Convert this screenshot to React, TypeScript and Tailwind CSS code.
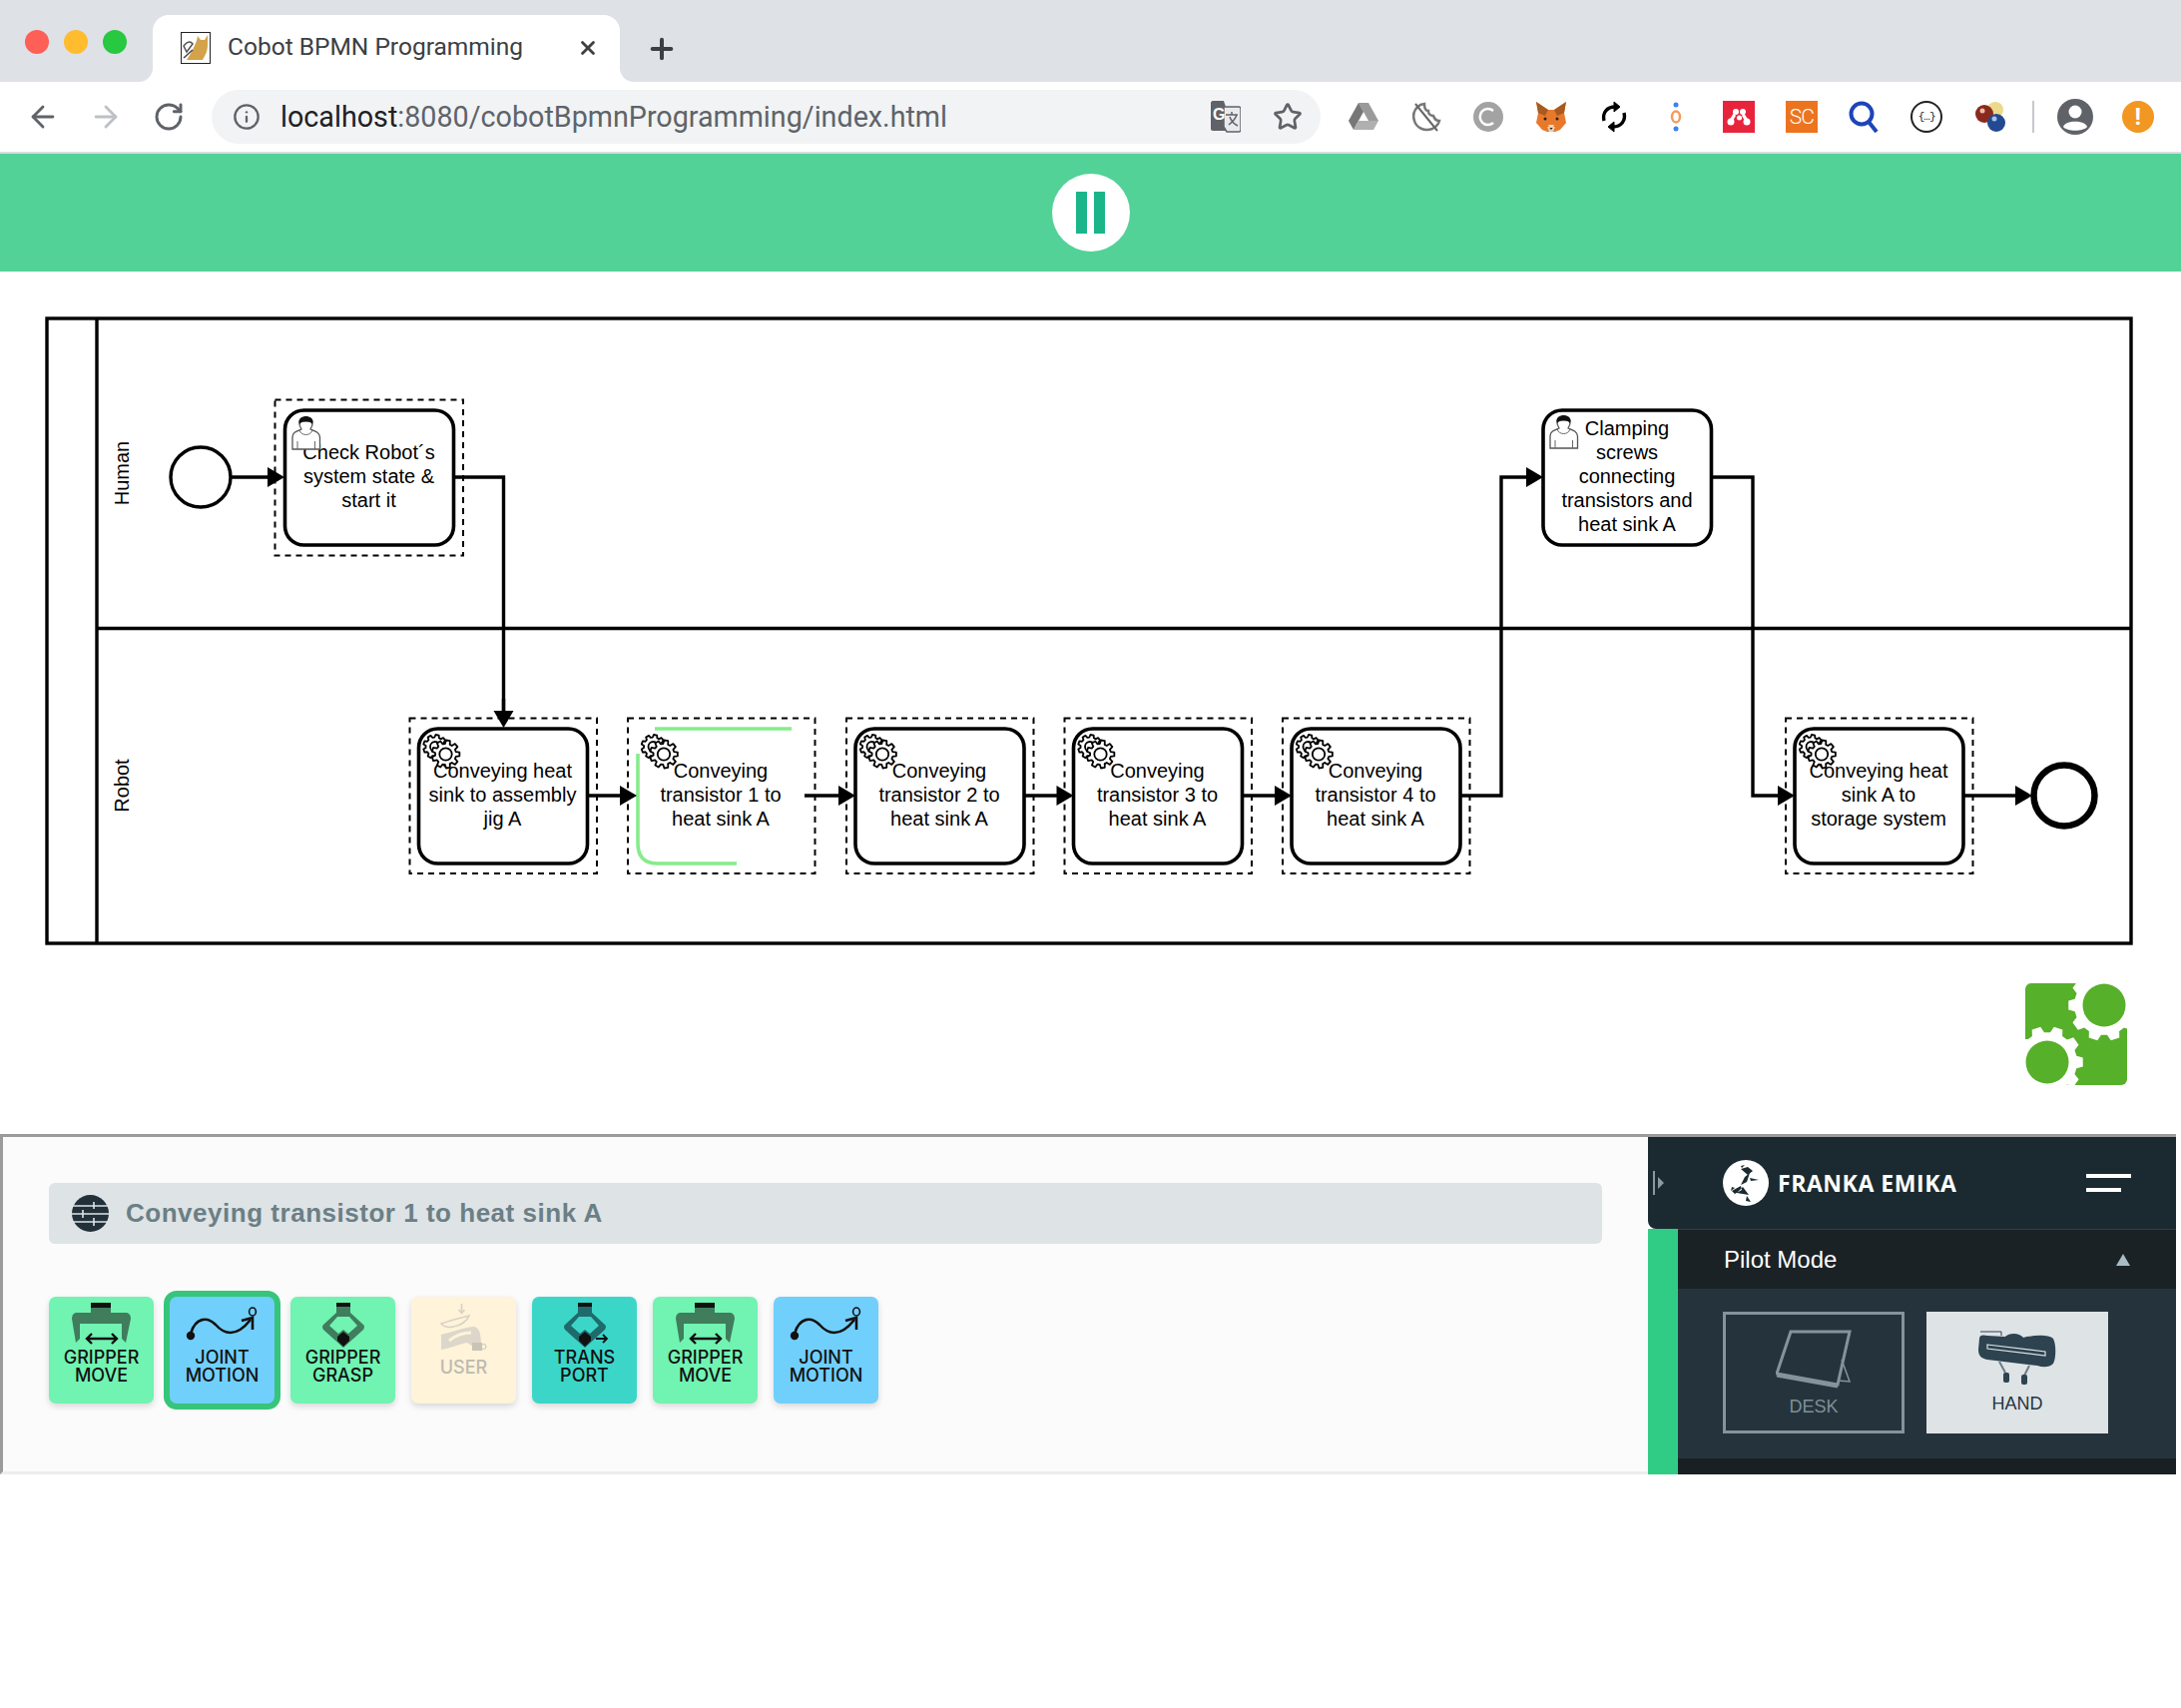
import React from "react";
import { ArrowLeft, ArrowRight, RotateCw, Info, Star, X, Plus } from "lucide-react";

function gearPath(cx: number, cy: number, rIn: number, rOut: number, teeth: number) {
  const pts: string[] = [];
  const step = (Math.PI * 2) / teeth;
  for (let i = 0; i < teeth; i++) {
    const a = i * step;
    const seq: [number, number][] = [
      [rIn, a - step * 0.34],
      [rOut, a - step * 0.2],
      [rOut, a + step * 0.2],
      [rIn, a + step * 0.34],
    ];
    for (const [r, t] of seq) pts.push(`${(cx + r * Math.cos(t)).toFixed(2)} ${(cy + r * Math.sin(t)).toFixed(2)}`);
  }
  return "M" + pts.join("L") + "Z";
}

function Gears({ x, y }: { x: number; y: number }) {
  return (
    <g fill="#fff" stroke="#000" strokeWidth={1.8} strokeLinejoin="round">
      <path d={gearPath(x + 16.5, y + 19, 9.5, 12, 9)} />
      <circle cx={x + 16.5} cy={y + 19} r={5} />
      <path d={gearPath(x + 27, y + 26.5, 10.5, 14, 9)} />
      <circle cx={x + 27} cy={y + 26.5} r={6.2} />
    </g>
  );
}

function Person({ x, y }: { x: number; y: number }) {
  return (
    <g transform={`translate(${x} ${y})`}>
      <path
        d="M1 33V21C1 16 5 15 10 13C8 10 7.5 8 8 5H21C21.5 8 21 10 19 13C24 15 28 16 28.5 21V33Z"
        fill="#fff"
        stroke="#555"
        strokeWidth={1.3}
      />
      <path d="M8 14C10 20 19 20 21 14M6 25V33M23.5 25V33" fill="none" stroke="#666" strokeWidth={1} />
      <path d="M8 8C6 2 11 0 14.5 0C18 0 23 2 21 8C18 4 11 4 8 8Z" fill="#111" />
    </g>
  );
}

function Arrow({ d, tx, ty, dir }: { d: string; tx: number; ty: number; dir: "r" | "d" }) {
  const head =
    dir === "r"
      ? `${tx},${ty} ${tx - 17},${ty - 10} ${tx - 17},${ty + 10}`
      : `${tx},${ty} ${tx - 10},${ty - 17} ${tx + 10},${ty - 17}`;
  return (
    <g>
      <path d={d} fill="none" stroke="#000" strokeWidth={3.4} />
      <polygon points={head} fill="#000" />
    </g>
  );
}

type Task = { x: number; lines: string[]; box?: boolean };

const robotTasks: Task[] = [
  { x: 419.5, lines: ["Conveying heat", "sink to assembly", "jig A"], box: true },
  { x: 638, lines: ["Conveying", "transistor 1 to", "heat sink A"], box: false },
  { x: 857, lines: ["Conveying", "transistor 2 to", "heat sink A"], box: true },
  { x: 1075.5, lines: ["Conveying", "transistor 3 to", "heat sink A"], box: true },
  { x: 1294, lines: ["Conveying", "transistor 4 to", "heat sink A"], box: true },
  { x: 1798, lines: ["Conveying heat", "sink A to", "storage system"], box: true },
];

function Lines({ cx, lines, first }: { cx: number; lines: string[]; first: number }) {
  return (
    <text textAnchor="middle" fill="#000" className="font-['Liberation_Sans',sans-serif] text-[20px]">
      {lines.map((l, i) => (
        <tspan key={i} x={cx} y={first + i * 24}>
          {l}
        </tspan>
      ))}
    </text>
  );
}

function Diagram() {
  return (
    <svg width={2092} height={632} viewBox="45 317 2092 632" className="block">
      <rect x={47} y={319} width={2088} height={626} fill="#fff" stroke="#000" strokeWidth={3.4} />
      <path d="M97 319V945M97 629.5H2135" stroke="#000" strokeWidth={3.4} fill="none" />
      <text
        transform="translate(129 474) rotate(-90)"
        textAnchor="middle"
        className="font-['Liberation_Sans',sans-serif] text-[20px]"
      >
        Human
      </text>
      <text
        transform="translate(129 787) rotate(-90)"
        textAnchor="middle"
        className="font-['Liberation_Sans',sans-serif] text-[20px]"
      >
        Robot
      </text>

      <circle cx={201} cy={478} r={30} fill="#fff" stroke="#000" strokeWidth={3.4} />
      <circle cx={2068} cy={797} r={30.5} fill="#fff" stroke="#000" strokeWidth={6.5} />

      <rect x={275.5} y={400.5} width={188.5} height={156} fill="none" stroke="#000" strokeWidth={2} strokeDasharray="6 5" />
      <rect x={285.5} y={411} width={169} height={135} rx={19} fill="#fff" stroke="#000" strokeWidth={3.6} />
      <Lines cx={369.5} lines={["Check Robot´s", "system state &", "start it"]} first={460} />
      <Person x={292} y={417} />

      <rect x={1546} y={411} width={168.5} height={135} rx={19} fill="#fff" stroke="#000" strokeWidth={3.6} />
      <Lines cx={1630} lines={["Clamping", "screws", "connecting", "transistors and", "heat sink A"]} first={436} />
      <Person x={1552} y={416} />

      {robotTasks.map((t, i) => (
        <g key={i}>
          <rect
            x={t.x - 9}
            y={719.5}
            width={187.5}
            height={155.5}
            fill="none"
            stroke="#000"
            strokeWidth={2}
            strokeDasharray="6 5"
          />
          {t.box ? (
            <rect x={t.x} y={730} width={169} height={135} rx={19} fill="#fff" stroke="#000" strokeWidth={3.6} />
          ) : (
            <path
              d="M656 730H793M639 755V845Q639 865 659 865H738"
              fill="none"
              stroke="#86ec8c"
              strokeWidth={3.6}
            />
          )}
          <Lines cx={t.x + 84} lines={t.lines} first={779} />
          <Gears x={t.x} y={729} />
        </g>
      ))}

      <Arrow d="M231 478H270" tx={285} ty={478} dir="r" />
      <path d="M455 478H504.5V712" fill="none" stroke="#000" strokeWidth={3.4} />
      <Arrow d="M504.5 700V714" tx={504.5} ty={729} dir="d" />
      <Arrow d="M589 797H625" tx={638} ty={797} dir="r" />
      <Arrow d="M806 797H845" tx={857} ty={797} dir="r" />
      <Arrow d="M1026.5 797H1062" tx={1075.5} ty={797} dir="r" />
      <Arrow d="M1245 797H1280" tx={1294} ty={797} dir="r" />
      <Arrow d="M1463.5 797H1504V478H1532" tx={1546} ty={478} dir="r" />
      <Arrow d="M1715 478H1756V797H1785" tx={1798} ty={797} dir="r" />
      <Arrow d="M1967.5 797H2025" tx={2036} ty={797} dir="r" />
    </svg>
  );
}

function GreenLogo() {
  return (
    <svg width={102} height={102} viewBox="0 0 102 102" className="block">
      <rect x={0} y={0} width={102} height={102} rx={6} fill="#56b029" />
      <path d={gearPath(79, 22, 30, 36, 10)} fill="#fff" />
      <path d={gearPath(22, 79, 30, 36, 10)} fill="#fff" />
      <rect x={68} y={0} width={34} height={43} fill="#fff" />
      <rect x={0} y={56} width={30} height={46} fill="#fff" />
      <circle cx={79} cy={22} r={21.5} fill="#56b029" />
      <circle cx={22} cy={79} r={21.5} fill="#56b029" />
    </svg>
  );
}

/* ---------- card icons ---------- */
function GripperMove() {
  return (
    <svg width={105} height={46} viewBox="0 0 105 46" className="block">
      <path d="M42 0H62V6H42Z" fill="#111" />
      <path
        d="M42 5H62V10H78Q82 11 82 16L77 40L73 36V21H31V36L27 40L23 16Q23 11 27 10H42Z"
        fill="#3f7d5c"
      />
      <path d="M39 36H67M43 31L38 36L43 41M63 31L68 36L63 41" fill="none" stroke="#111" strokeWidth={2.4} />
    </svg>
  );
}
function JointMotion() {
  return (
    <svg width={105} height={46} viewBox="0 0 105 46" className="block">
      <circle cx={21} cy={33} r={4.2} fill="#111" />
      <path d="M21 31C26 14 38 14 46 22C54 31 66 36 81 17" fill="none" stroke="#111" strokeWidth={2.6} />
      <path d="M72 18L83 15L83 27" fill="none" stroke="#111" strokeWidth={2.6} />
      <ellipse cx={83} cy={9} rx={3.4} ry={4} fill="none" stroke="#111" strokeWidth={1.6} />
    </svg>
  );
}
function Grasp({ color, hole, arrow }: { color: string; hole: string; arrow?: boolean }) {
  return (
    <svg width={105} height={46} viewBox="0 0 105 46" className="block">
      <path d="M46 0H60V5H46Z" fill="#111" />
      <path d="M46 4H60V10L73 22Q75 24 73 27L53 45L33 27Q31 24 33 22L46 10Z" fill={color} />
      <path d="M47 14H59L67 23L58 31L53 27L48 31L39 23Z" fill={hole} />
      <path d="M47 34L53 29L59 34V38L53 44L47 38Z" fill="#111" />
      {arrow && <path d="M64 36H75M71 32L75 36L71 40" fill="none" stroke="#111" strokeWidth={1.8} />}
    </svg>
  );
}
function UserIcon() {
  return (
    <svg width={105} height={56} viewBox="0 0 105 56" className="block">
      <g fill="none" stroke="#d8d2c4" strokeWidth={1.6}>
        <path d="M50.5 1V10M47.5 7L50.5 10.500L53.500 7" />
        <path d="M30 21C38 18 46 16 58 13C56 18 50 23 42 24C38 25 33 24 30 21Z" />
      </g>
      <path
        d="M30 32C42 29 52 25 62 24C68 24 70 30 70 44H62L56 40C46 42 38 46 30 47Z"
        fill="#dcd7ca"
      />
      <path d="M38 38C44 33 52 30 60 30" fill="none" stroke="#fff3d8" strokeWidth={3} />
      <rect x={61} y={40} width={10} height={8} fill="#c9c4b8" />
      <circle cx={72.500} cy={44} r={2.500} fill="none" stroke="#c9c4b8" />
    </svg>
  );
}

const cards = [
  { l: ["GRIPPER", "MOVE"], bg: "bg-[#71f3b2]", icon: <GripperMove /> },
  { l: ["JOINT", "MOTION"], bg: "bg-[#71cffc]", icon: <JointMotion />, sel: true },
  { l: ["GRIPPER", "GRASP"], bg: "bg-[#71f3b2]", icon: <Grasp color="#3f7d5c" hole="#71f3b2" /> },
  { l: ["USER"], bg: "bg-[#fff3d9]", icon: <UserIcon />, faded: true },
  { l: ["TRANS", "PORT"], bg: "bg-[#3cd6c9]", icon: <Grasp color="#1f6a6a" hole="#3cd6c9" arrow /> },
  { l: ["GRIPPER", "MOVE"], bg: "bg-[#71f3b2]", icon: <GripperMove /> },
  { l: ["JOINT", "MOTION"], bg: "bg-[#71cffc]", icon: <JointMotion /> },
];

/* ---------- toolbar icons ---------- */
function Favicon() {
  return (
    <svg width={30} height={32} viewBox="0 0 30 32" className="block">
      <rect x={0.5} y={0.5} width={29} height={31} fill="#fff" stroke="#222" />
      <path d="M17 4L20 8L24 8L27 3V13C27 20 24 24 22 28H6L11 20C13 15 16 11 17 4Z" fill="#d3a24a" />
      <path d="M3 14C7 9 10 9 12 12L6 20Z" fill="none" stroke="#555" strokeWidth={1.5} />
      <path d="M3 26L12 18" stroke="#444" strokeWidth={1.5} />
    </svg>
  );
}

function Ext({ children }: { children: React.ReactNode }) {
  return <div className="flex h-full w-[62.7px] items-center justify-center">{children}</div>;
}

function ToolbarExtensions() {
  return (
    <>
      <Ext>
        <svg width={32} height={30} viewBox="0 0 32 30">
          <path d="M11 1H21L31 19H21Z" fill="#9a9a9a" />
          <path d="M11 1L1 19L6 28L16 10Z" fill="#777" />
          <path d="M6 28H26L31 19H11Z" fill="#b0b0b0" />
        </svg>
      </Ext>
      <Ext>
        <svg width={32} height={32} viewBox="0 0 32 32" fill="none" stroke="#777" strokeWidth={2.500}>
          <path d="M10 4C4 8 2 14 4 20C6 27 14 31 22 28C26 26 28 24 29 20C26 20 24 18 23 15C20 15 18 13 18 10C15 10 14 7 14 3Z" />
          <path d="M5 3L27 30" strokeWidth={2} stroke="#666" />
        </svg>
      </Ext>
      <Ext>
        <svg width={30} height={30} viewBox="0 0 30 30">
          <circle cx={15} cy={15} r={15} fill="#a3a3a3" />
          <path d="M20 9A8 8 0 1 0 20 21" fill="none" stroke="#fff" strokeWidth={2.500} />
        </svg>
      </Ext>
      <Ext>
        <svg width={32} height={32} viewBox="0 0 32 32">
          <path d="M1 1L13 9H19L31 1L29 12L31 22L25 29L20 31H12L7 29L1 22L3 12Z" fill="#e8792a" />
          <path d="M1 1L13 9L10 15L3 12Z" fill="#a85a20" />
          <path d="M31 1L19 9L22 15L29 12Z" fill="#a85a20" />
          <path d="M13 24L16 31L19 24Z" fill="#f3d7b8" />
          <path d="M12 26H20L18 31H14Z" fill="#e6d0b8" />
          <path d="M14.500 27H17.500L16 29Z" fill="#222" />
          <circle cx={10} cy={18} r={1.5} fill="#222" />
          <circle cx={22} cy={18} r={1.5} fill="#222" />
        </svg>
      </Ext>
      <Ext>
        <svg width={30} height={32} viewBox="0 0 30 32" fill="none" stroke="#000" strokeWidth={3.4}>
          <path d="M5 20C3 12 8 6 16 6" />
          <path d="M25 12C27 20 22 26 14 26" />
          <path d="M15 1L21 6L15 11Z" fill="#000" strokeWidth={1} />
          <path d="M15 21L9 26L15 31Z" fill="#000" strokeWidth={1} />
        </svg>
      </Ext>
      <Ext>
        <svg width={12} height={30} viewBox="0 0 12 30">
          <circle cx={6} cy={3} r={2.5} fill="#3b82f6" />
          <ellipse cx={6} cy={15} rx={4} ry={5.500} fill="none" stroke="#f59a5f" strokeWidth={2.500} />
          <circle cx={6} cy={27} r={2.5} fill="#3b82f6" />
        </svg>
      </Ext>
      <Ext>
        <div className="flex h-[32px] w-[32px] items-center justify-center bg-[#e8243c]">
          <svg width={24} height={18} viewBox="0 0 24 18" fill="#fff">
            <circle cx={9} cy={4} r={3} />
            <circle cx={16} cy={4} r={3} />
            <circle cx={12.500} cy={10} r={2.5} />
            <circle cx={4} cy={14} r={3.5} />
            <circle cx={20} cy={14} r={3.5} />
            <path d="M7 5L2 13H6L9 8ZM17 5L22 13H18L15 8Z" />
          </svg>
        </div>
      </Ext>
      <Ext>
        <div className="flex h-[32px] w-[32px] items-center justify-center bg-[#ec741e] text-[21px] font-light leading-none tracking-[-1px] text-white">
          SC
        </div>
      </Ext>
      <Ext>
        <svg width={30} height={32} viewBox="0 0 30 32" fill="none" stroke="#1d45b8" strokeWidth={4}>
          <ellipse cx={13} cy={13} rx={10.500} ry={10.500} />
          <path d="M20 21L28 31" />
        </svg>
      </Ext>
      <Ext>
        <div className="flex h-[32px] w-[32px] items-center justify-center rounded-full border-[2px] border-[#222] font-['Liberation_Mono',monospace] text-[11px] tracking-[-1px] text-[#222]">
          {"{…}"}
        </div>
      </Ext>
      <Ext>
        <svg width={32} height={32} viewBox="0 0 32 32">
          <circle cx={22} cy={9} r={8} fill="#ecd98a" />
          <circle cx={11} cy={13} r={9} fill="#8a2a1e" />
          <circle cx={23} cy={22} r={9} fill="#234a90" />
          <circle cx={9} cy={10} r={2.500} fill="#f2b9a8" />
          <circle cx={21} cy={18} r={2.500} fill="#a8c2ee" />
        </svg>
      </Ext>
    </>
  );
}

function SliderCircle() {
  return (
    <svg width={37} height={37} viewBox="0 0 37 37" className="block">
      <circle cx={18.500} cy={18.500} r={18.500} fill="#22303a" />
      <g stroke="#dee3e6" strokeWidth={1.6}>
        <path d="M0 11H37M0 19H37M0 27H37" />
        <path d="M22 7V14M11 15V23M22 23V31" />
      </g>
    </svg>
  );
}

function FrankaLogo() {
  return (
    <svg width={46} height={46} viewBox="0 0 46 46" className="block">
      <circle cx={23} cy={23} r={23} fill="#fff" />
      <g fill="#1b2a30">
        <path d="M18 9L25 7L30 11L25 15ZM18 6L22 5L19 8Z" />
        <path d="M27 13L24 22L18 25L22 17ZM27 18L36 20L28 21Z" />
        <path d="M18 26L9 31L12 34L19 30ZM20 27L26 35L14 33Z" />
        <path d="M9 27L12 28L8 31ZM24 36L28 42L23 41Z" />
      </g>
    </svg>
  );
}

function Tablet() {
  return (
    <svg width={76} height={60} viewBox="0 0 76 60" className="block">
      <path d="M15 2H74L62 55L1 44Z" fill="none" stroke="#84939c" strokeWidth={3} />
      <path d="M1 46L62 57" stroke="#84939c" strokeWidth={3} />
      <path d="M66 30L74 52L62 51" fill="none" stroke="#84939c" strokeWidth={1.500} />
    </svg>
  );
}

function HandIcon() {
  return (
    <svg width={80} height={56} viewBox="0 0 80 56" className="block">
      <path d="M2 9C2 5 6 5 10 6L28 7C32 3 42 3 46 8C58 5 72 5 76 9C79 15 79 28 76 34C72 38 66 38 60 36L10 30C4 29 1 26 1 20Z" fill="#2d4350" />
      <path d="M3 2H24V6M28 7C32 10 42 10 46 8" fill="none" stroke="#2d4350" strokeWidth={1} />
      <path d="M10 15L68 22V26L10 19Z" fill="none" stroke="#dde2e5" strokeWidth={1.200} />
      <path d="M22 32L28 43M52 36L47 46" stroke="#6c7e88" strokeWidth={2} />
      <rect x={26} y={43} width={6} height={10} rx={2} fill="#2d4350" />
      <rect x={44} y={45} width={6} height={10} rx={2} fill="#2d4350" />
    </svg>
  );
}

export default function App() {
  return (
    <div className="h-[1711px] w-[2185px] overflow-hidden bg-white font-['Liberation_Sans',sans-serif]">
      {/* tab strip */}
      <div className="flex h-[82px] bg-[#dee1e6] font-['Roboto',sans-serif]">
        <div className="flex w-[153px] items-start gap-[15px] pl-[25px] pt-[30px]">
          <span className="h-[24px] w-[24px] rounded-full bg-[#fe5f57]" />
          <span className="h-[24px] w-[24px] rounded-full bg-[#febc2e]" />
          <span className="h-[24px] w-[24px] rounded-full bg-[#28c840]" />
        </div>
        <div className="relative mt-[15px] flex h-[67px] w-[468px] items-center rounded-t-[16px] bg-white pb-[2px] pl-[28px]">
          <span className="absolute bottom-0 left-[-14px] h-[14px] w-[14px] bg-white">
            <span className="block h-full w-full rounded-br-[14px] bg-[#dee1e6]" />
          </span>
          <span className="absolute bottom-0 right-[-14px] h-[14px] w-[14px] bg-white">
            <span className="block h-full w-full rounded-bl-[14px] bg-[#dee1e6]" />
          </span>
          <Favicon />
          <span className="ml-[17px] w-[350px] text-[24.5px] leading-none text-[#3c4043]">Cobot BPMN Programming</span>
          <X size={22} strokeWidth={3} className="text-[#3c4043]" />
        </div>
        <div className="ml-[26px] flex h-[82px] items-center pt-[16px]">
          <Plus size={32} strokeWidth={3} className="text-[#3c4043]" />
        </div>
      </div>

      {/* toolbar */}
      <div className="flex h-[72px] items-center border-b-[2px] border-[#dadce0] bg-white pl-[11px] font-['Roboto',sans-serif]">
        <div className="flex w-[63px] justify-center">
          <ArrowLeft size={34} strokeWidth={2} className="text-[#5f6368]" />
        </div>
        <div className="flex w-[63px] justify-center">
          <ArrowRight size={34} strokeWidth={2} className="text-[#bdc1c6]" />
        </div>
        <div className="flex w-[63px] justify-center">
          <RotateCw size={32} strokeWidth={2.2} className="text-[#5f6368]" />
        </div>
        <div className="ml-[12px] flex h-[54px] w-[1111px] items-center rounded-full bg-[#f1f3f4] pl-[21px]">
          <Info size={28} strokeWidth={2} className="text-[#5f6368]" />
          <span className="ml-[20px] w-[670px] whitespace-nowrap text-[28.7px] leading-none text-[#5f6368]">
            <span className="text-[#202124]">localhost</span>:8080/cobotBpmnProgramming/index.html
          </span>
          <svg width={30} height={32} viewBox="0 0 30 32" className="ml-[262px] block">
            <path d="M0 2C0 1 1 0 2 0H13L22 28C22 30 21 30 20 30H2C1 30 0 29 0 28Z" fill="#5f6368" />
            <path d="M13 6H28C29 6 30 7 30 8V29C30 30 29 31 28 31H16L13 26Z" fill="#e8eaed" stroke="#5f6368" strokeWidth={1.500} />
            <path d="M15 14H27M21 11V14M18 24C22 21 25 17 26 14M19 16C20 19 23 23 27 25" fill="none" stroke="#5f6368" strokeWidth={1.5} />
            <text x={2} y={19} fill="#fff" className="font-['Liberation_Sans',sans-serif] text-[16px] font-bold">G</text>
          </svg>
          <Star size={30} strokeWidth={2.2} className="ml-[32px] text-[#5f6368]" />
        </div>
        <div className="ml-[11.600px] flex h-full">
          <ToolbarExtensions />
        </div>
        <div className="ml-[11.700px] h-[32px] w-[2px] bg-[#c6c9cd]" />
        <div className="ml-[9.500px] flex w-[63px] justify-center">
          <svg width={36} height={36} viewBox="0 0 36 36">
            <circle cx={18} cy={18} r={18} fill="#5f6368" />
            <circle cx={18} cy={13} r={6.500} fill="#fff" />
            <path d="M6 28C8 21 28 21 30 28C26 33 10 33 6 28Z" fill="#fff" />
          </svg>
        </div>
        <div className="flex w-[63px] justify-center">
          <div className="flex h-[32px] w-[32px] items-center justify-center rounded-full bg-[#f29721] text-[24px] font-bold leading-none text-white">
            !
          </div>
        </div>
      </div>

      {/* run bar */}
      <div className="flex h-[118px] items-center justify-center bg-[#53d298]">
        <div className="flex h-[78px] w-[78px] items-center justify-center gap-[7px] rounded-full bg-white">
          <span className="h-[42px] w-[11px] bg-[#1bb58a]" />
          <span className="h-[42px] w-[11px] bg-[#1bb58a]" />
        </div>
      </div>

      {/* diagram */}
      <div className="pl-[45px] pt-[45px]">
        <Diagram />
        <div className="flex justify-end pr-[54px] pt-[36px]">
          <GreenLogo />
        </div>
      </div>

      {/* bottom panel */}
      <div className="mt-[49px] flex h-[341px] w-[2180px] border-t-[3px] border-[#9b9b9b]">
        <div className="w-[1651px] border-b-[3px] border-l-[3px] border-b-[#ededed] border-l-[#9b9b9b] bg-[#fbfbfb] pl-[46px] pr-[46px] pt-[46px]">
          <div className="flex h-[61px] items-center rounded-[6px] bg-[#dee3e6] pl-[23px]">
            <SliderCircle />
            <span className="ml-[17px] text-[26px] font-bold tracking-[0.52px] text-[#6b7f85]">
              Conveying transistor 1 to heat sink A
            </span>
          </div>
          <div className="mt-[53px] flex gap-[16px]">
            {cards.map((c, i) => (
              <div
                key={i}
                className={
                  "flex h-[107px] w-[105px] flex-col items-center rounded-[7px] pt-[6px] shadow-[0_3px_6px_rgba(0,0,0,0.14)] " +
                  c.bg +
                  (c.sel ? " ring-[6px] ring-[#36c57a]" : "")
                }
              >
                {c.icon}
                <div
                  className={
                    "text-center font-['Inter',sans-serif] text-[18px] font-medium leading-[18px] " +
                    (c.faded ? "text-[#bdbab2]" : "text-[#111]")
                  }
                >
                  {c.l.map((t) => (
                    <div key={t}>{t}</div>
                  ))}
                </div>
              </div>
            ))}
          </div>
        </div>

        <div className="flex w-[529px] flex-col">
          <div className="flex h-[92px] items-center rounded-bl-[8px] bg-[#1b2a30]">
            <div className="ml-[5px] flex w-[70px] items-center">
              <span className="h-[24px] w-[2px] bg-[#8a9aa3]" />
              <span className="ml-[3px] h-0 w-0 border-y-[6px] border-l-[6px] border-y-transparent border-l-[#8a9aa3]" />
            </div>
            <FrankaLogo />
            <span className="ml-[9px] font-['Open_Sans',sans-serif] text-[23px] font-bold tracking-[0.55px] text-white">
              FRANKA EMIKA
            </span>
            <div className="ml-auto mr-[45px] flex w-[45px] flex-col gap-[10px]">
              <span className="h-[4px] w-[45px] bg-white" />
              <span className="h-[4px] w-[35px] bg-white" />
            </div>
          </div>
          <div className="flex flex-1">
            <div className="w-[30px] bg-[#30cc86]" />
            <div className="flex flex-1 flex-col">
              <div className="flex h-[60px] items-center border-t-[1px] border-[#2c3f49] bg-[#1a2226] pl-[46px] pr-[46px]">
                <span className="text-[24px] text-white">Pilot Mode</span>
                <span className="ml-auto h-0 w-0 border-x-[7.5px] border-b-[12px] border-x-transparent border-b-[#a9bcc6]" />
              </div>
              <div className="flex h-[170px] gap-[22px] bg-[#25343c] pl-[45px] pt-[23px]">
                <div className="flex h-[122px] w-[182px] flex-col items-center border-[3px] border-[#84939c] pt-[15px]">
                  <Tablet />
                  <span className="mt-[8px] text-[18px] leading-none text-[#7f8f98]">DESK</span>
                </div>
                <div className="flex h-[122px] w-[182px] flex-col items-center bg-[#dee3e6] pt-[18px]">
                  <HandIcon />
                  <span className="mt-[9px] text-[18px] leading-none text-[#263640]">HAND</span>
                </div>
              </div>
              <div className="flex-1 bg-[#182024]" />
            </div>
          </div>
        </div>
      </div>
    </div>
  );
}
